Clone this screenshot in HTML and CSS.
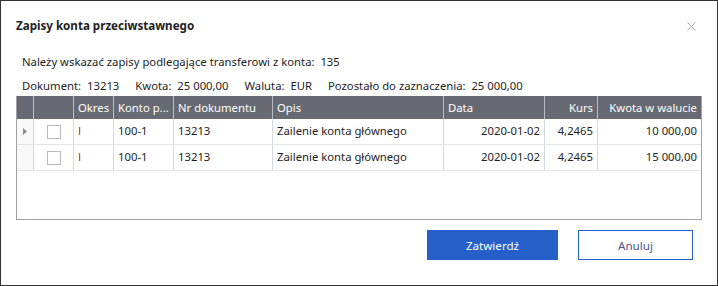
FILE: index.html
```html
<!DOCTYPE html>
<html lang="pl">
<head>
    <meta charset="UTF-8">
    <title>Zapisy konta przeciwstawnego</title>
    <link rel="stylesheet" href="styles.css">
</head>
<body>
    <div class="dialog">
        <div class="dialog-header">
            <h2>Zapisy konta przeciwstawnego</h2>
            <span class="close">
                <svg width="9" height="9" viewBox="0 0 9 9"><path d="M0.5 0.5 L8.5 8.5 M8.5 0.5 L0.5 8.5" stroke="#a8a8a8" stroke-width="1"/></svg>
            </span>
        </div>
        <div class="info">
            <div class="info-line">Należy wskazać zapisy podlegające transferowi z konta:&nbsp; 135</div>
            <div class="info-line">
                <span>Dokument:&nbsp; 13213</span>
                <span>Kwota:&nbsp; 25 000,00</span>
                <span>Waluta:&nbsp; EUR</span>
                <span>Pozostało do zaznaczenia:&nbsp; 25 000,00</span>
            </div>
        </div>
        <div class="grid">
            <div class="grid-head">
                <div class="cell"></div>
                <div class="cell"></div>
                <div class="cell">Okres</div>
                <div class="cell">Konto p...</div>
                <div class="cell">Nr dokumentu</div>
                <div class="cell">Opis</div>
                <div class="cell">Data</div>
                <div class="cell right">Kurs</div>
                <div class="cell right">Kwota w walucie</div>
            </div>
            <div class="grid-row">
                <div class="cell row-head">
                    <svg width="4" height="7" viewBox="0 0 4 7"><path d="M0 0 L4 3.5 L0 7 Z" fill="#8a8a8a"/></svg>
                </div>
                <div class="cell center"><span class="check"></span></div>
                <div class="cell period">I</div>
                <div class="cell">100-1</div>
                <div class="cell">13213</div>
                <div class="cell">Zailenie konta głównego</div>
                <div class="cell right">2020-01-02</div>
                <div class="cell right">4,2465</div>
                <div class="cell right">10 000,00</div>
            </div>
            <div class="grid-row">
                <div class="cell row-head"></div>
                <div class="cell center"><span class="check"></span></div>
                <div class="cell period">I</div>
                <div class="cell">100-1</div>
                <div class="cell">13213</div>
                <div class="cell">Zailenie konta głównego</div>
                <div class="cell right">2020-01-02</div>
                <div class="cell right">4,2465</div>
                <div class="cell right">15 000,00</div>
            </div>
        </div>
        <div class="dialog-footer">
            <button class="btn btn-primary">Zatwierdź</button>
            <button class="btn btn-secondary">Anuluj</button>
        </div>
    </div>
</body>
</html>
```

FILE: styles.css
```css
body {
    margin: 0;
    font-family: "Noto Sans", "Open Sans", sans-serif;
    font-size: 11.3px;
    color: #1e1e1e;
    background: #fff;
}
.dialog {
    box-sizing: border-box;
    width: 718px;
    height: 286px;
    border: 1px solid #333;
    background: #fff;
}
.dialog-header {
    display: flex;
    align-items: center;
    justify-content: space-between;
    height: 49px;
    padding: 0 21px 0 15px;
}
.dialog-header h2 {
    margin: 0;
    font-size: 11.6px;
    font-weight: bold;
    color: #222;
}
.close {
    display: flex;
    margin-top: 1px;
}
.info {
    padding: 2px 0 0 21px;
}
.info-line {
    height: 20px;
    line-height: 20px;
    margin-bottom: 4px;
    display: flex;
    gap: 16px;
}
.info-line:last-child {
    margin-bottom: 0;
}
.grid {
    box-sizing: border-box;
    width: 686px;
    height: 124px;
    margin-left: 15px;
    border: 1px solid #a0a0a6;
    border-top: none;
}
.grid-head, .grid-row {
    display: grid;
    grid-template-columns: 17px 40px 40px 60px 99px 171px 101px 53px 103px;
}
.grid-head {
    height: 23px;
    background: #676a73;
    color: #fff;
}
.grid-head .cell {
    border-right: 1px solid #b8bcc4;
    line-height: 23px;
}
.grid-row {
    height: 25px;
    border-bottom: 1px solid #e2e4e8;
}
.cell {
    box-sizing: border-box;
    padding: 0 4px;
    border-right: 1px solid #d3d9e2;
    line-height: 24px;
    white-space: nowrap;
    overflow: hidden;
}
.cell:last-child {
    border-right: none;
}
.cell.right {
    text-align: right;
}
.cell.center {
    display: flex;
    align-items: center;
    justify-content: center;
}
.row-head {
    display: flex;
    align-items: center;
    padding: 0 0 0 6px;
    background: #f8f8f8;
}
.check {
    box-sizing: border-box;
    width: 14px;
    height: 14px;
    border: 1px solid #b9b9b9;
    background: #fff;
}
.period {
    font-family: "Open Sans", "DejaVu Sans", sans-serif;
    color: #a01c1c;
}
.dialog-footer {
    display: flex;
    justify-content: flex-end;
    gap: 20px;
    padding: 10px 24px 0 0;
}
.btn {
    box-sizing: border-box;
    height: 30px;
    font-family: inherit;
    font-size: 11.6px;
    border: 1px solid #2560c8;
    cursor: pointer;
}
.btn-primary {
    width: 131px;
    background: #2560c8;
    color: #fff;
}
.btn-secondary {
    width: 115px;
    background: #fff;
    color: #4f528f;
}
```
